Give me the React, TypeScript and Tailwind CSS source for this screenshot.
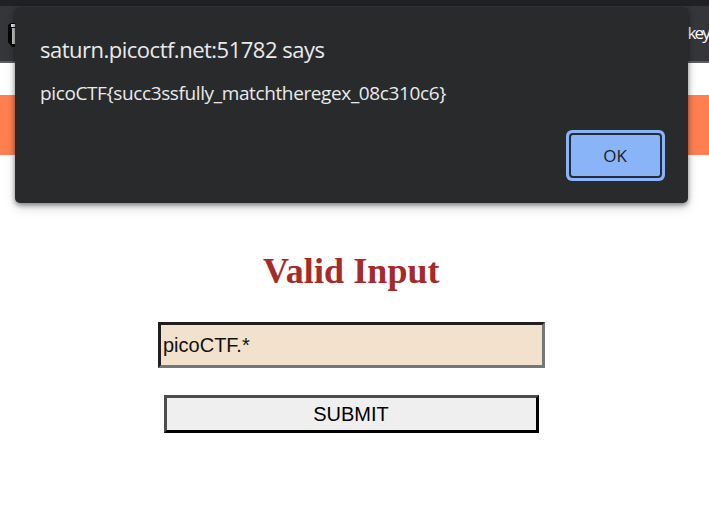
function AlertDialog() {
  return (
    <section
      role="alertdialog"
      className="absolute top-[7px] left-[15px] flex h-[196px] w-[673px] flex-col rounded-[5px] bg-[#292a2b] pt-[24px] pr-[23px] pl-[25px] font-['Open_Sans','Noto_Sans',sans-serif] text-[#e8eaed] shadow-[0_2px_5px_rgba(0,0,0,0.45),0_5px_12px_rgba(0,0,0,0.15)]"
    >
      <h2 className="h-[36px] text-[22px] leading-[36px] tracking-[-0.5px] whitespace-nowrap">saturn.picoctf.net:51782 says</h2>
      <p className="mt-[11px] h-[30px] text-[19px] leading-[30px] tracking-[-0.38px] whitespace-nowrap">
        picoCTF&#123;succ3ssfully_matchtheregex_08c310c6&#125;
      </p>
      <button className="mt-[22px] flex h-[51px] w-[99px] self-end rounded-[6px] bg-[#8ab4f8] p-[3px] text-[#202124]">
        <span className="flex h-full w-full items-center justify-center rounded-[4px] border-2 border-[#252b38] pr-px text-[17px] font-medium">OK</span>
      </button>
    </section>
  );
}

export default function App() {
  return (
    <div className="relative h-[513px] w-[709px] overflow-hidden bg-white">
      <div className="h-[6px] bg-[#202124]" />
      <nav className="flex h-[57px] items-start justify-between border-b-2 border-[#5c5d60] bg-[#35363a]">
        <svg className="mt-[16px] ml-[8px]" width="8" height="26" viewBox="0 0 8 26">
          <path d="M0 3L3 1H8V25H4L0 20Z" fill="#050505" />
          <path d="M3 2H8V5H3Z" fill="#e8e8e8" />
          <path d="M4 6H7V22H4Z" fill="#c9c9c9" />
        </svg>
        <span className="mt-[13px] font-['Open_Sans','Noto_Sans',sans-serif] text-[17px] leading-[28px] tracking-[-1.8px] whitespace-nowrap text-white">key</span>
      </nav>
      <div className="mt-[32px] h-[60px] bg-[#ff7f50]" />
      <main className="flex flex-col items-start pt-[95px]">
        <h1 className="ml-[263px] h-[42px] font-['Liberation_Serif',serif] text-[36px] leading-[42px] font-bold tracking-[0.08px] whitespace-nowrap text-[#a52a2a]">
          Valid Input
        </h1>
        <input
          defaultValue="picoCTF.*"
          className="mt-[30px] ml-[158px] h-[46px] w-[387px] border-3 border-t-[#201e1e] border-r-[#767676] border-b-[#767676] border-l-[#201e1e] bg-[#f1e1cd] px-[2px] font-['Liberation_Sans',sans-serif] text-[20px] text-[#111] outline-none"
        />
        <button className="mt-[27px] ml-[164px] h-[38px] w-[375px] border-3 border-t-[#4d4d4d] border-r-black border-b-black border-l-[#4d4d4d] bg-[#efefef] pr-px font-['Liberation_Sans',sans-serif] text-[20px] leading-[32px] text-black">
          SUBMIT
        </button>
      </main>
      <AlertDialog />
    </div>
  );
}
